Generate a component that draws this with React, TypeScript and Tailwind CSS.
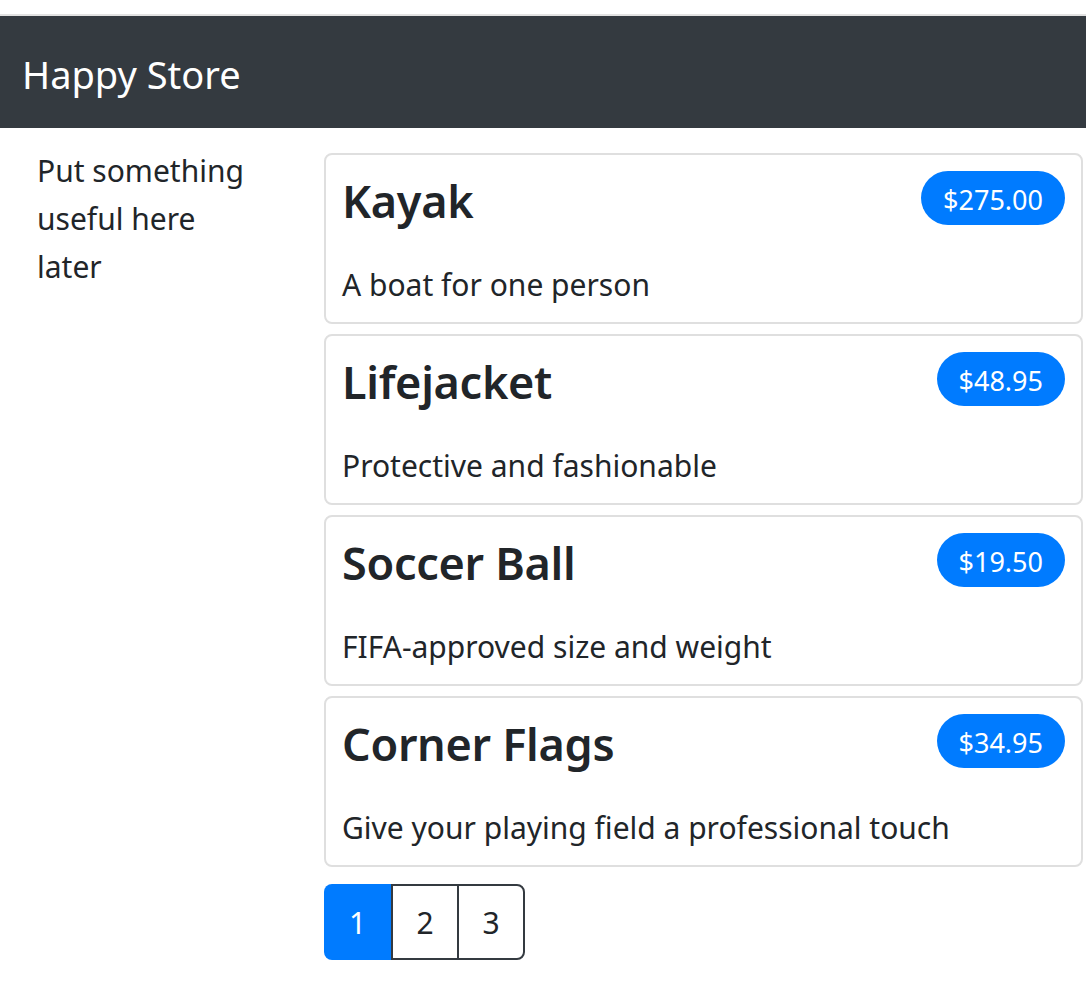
const products = [
  { name: 'Kayak', price: '$275.00', description: 'A boat for one person' },
  { name: 'Lifejacket', price: '$48.95', description: 'Protective and fashionable' },
  { name: 'Soccer Ball', price: '$19.50', description: 'FIFA-approved size and weight' },
  { name: 'Corner Flags', price: '$34.95', description: 'Give your playing field a professional touch' },
]

function ProductCard({ name, price, description }: { name: string; price: string; description: string }) {
  return (
    <div className="mb-[10px] rounded-lg border-2 border-[#dfdfdf] p-2">
      <div className="flex items-start justify-between p-2">
        <h4 className="mt-[2px] mb-[14px] text-[45px] font-semibold leading-[56px] tracking-[-0.3px]">{name}</h4>
        <span className="rounded-full bg-[#007bff] px-[22px] pt-[11px] pb-[7px] text-[27px] leading-[36px] text-white">
          {price}
        </span>
      </div>
      <div className="px-2 pt-[10px] pb-[6px] text-[30px] leading-[47px]">{description}</div>
    </div>
  )
}

export default function App() {
  return (
    <div className="min-h-screen bg-white text-[#212529] font-['Noto_Sans',sans-serif]">
      <div className="h-[14px] bg-white" />
      <div className="h-[2px] bg-[#e2e2e2]" />
      <div className="flex h-[112px] items-center bg-[#343a40] px-[22px] pt-[3px]">
        <span className="text-[38px] leading-[60px] text-white">Happy Store</span>
      </div>
      <div className="flex pt-[25px] pr-[3px]">
        <div className="w-[324px] shrink-0 pl-[37px] pr-6 text-[30px] leading-[48px]">
          <p className="-mt-[6px] w-[230px]">Put something useful here later</p>
        </div>
        <div className="flex-1">
          {products.map((p) => (
            <ProductCard key={p.name} {...p} />
          ))}
          <div className="mt-[17px] flex">
            <button className="h-[76px] w-[67px] rounded-l-lg bg-[#007bff] text-[30px] text-white">1</button>
            <button className="h-[76px] w-[68px] border-2 border-[#343a40] text-[30px]">2</button>
            <button className="-ml-[2px] h-[76px] w-[68px] rounded-r-lg border-2 border-[#343a40] text-[30px]">3</button>
          </div>
        </div>
      </div>
    </div>
  )
}
